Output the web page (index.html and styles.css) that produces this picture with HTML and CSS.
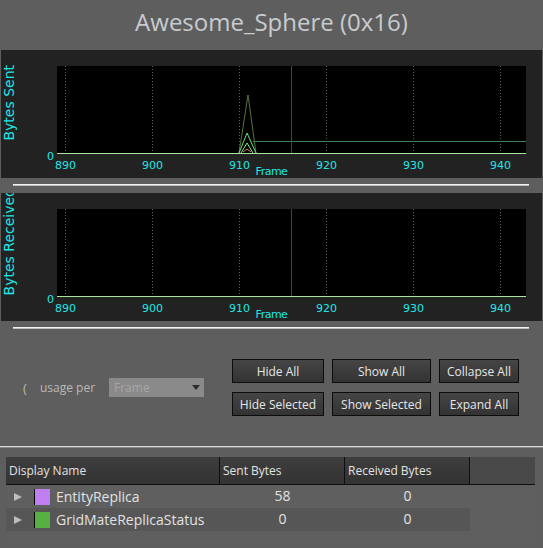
FILE: index.html
```html
<!DOCTYPE html>
<html>
<head>
<meta charset="utf-8">
<link rel="stylesheet" href="styles.css">
</head>
<body>
<div class="app">
  <h1 class="title">Awesome_Sphere (0x16)</h1>

  <section class="chart">
    <div class="chart-body">
      <div class="ycol">
        <span class="ylabel ylabel-sent">Bytes Sent</span>
        <span class="zero">0</span>
      </div>
      <svg class="plot" width="469" height="88" viewBox="0 0 469 88">
        <rect x="0" y="0" width="469" height="88" fill="#000"/>
        <g stroke="#5c5c5c" stroke-width="1" stroke-dasharray="1 2">
          <line x1="8.5" y1="0" x2="8.5" y2="87"/>
          <line x1="95.5" y1="0" x2="95.5" y2="87"/>
          <line x1="182.5" y1="0" x2="182.5" y2="87"/>
          <line x1="269.5" y1="0" x2="269.5" y2="87"/>
          <line x1="356.5" y1="0" x2="356.5" y2="87"/>
          <line x1="443.5" y1="0" x2="443.5" y2="87"/>
        </g>
        <line x1="196" y1="75.5" x2="469" y2="75.5" stroke="#3e7c62" stroke-width="1"/>
        <polyline points="182,87 191,29 199,87" fill="none" stroke="#55723f" stroke-width="1"/>
        <polyline points="182,87 190,67 199,87" fill="none" stroke="#62e27c" stroke-width="1"/>
        <polyline points="184,87 190,77 196,87" fill="none" stroke="#86e486" stroke-width="1"/>
        <polyline points="186,86 190,83 194,86" fill="none" stroke="#e07a6e" stroke-width="1"/>
        <line x1="234.5" y1="0" x2="234.5" y2="87" stroke="#e00000" stroke-width="1"/>
        <line x1="0" y1="87.5" x2="469" y2="87.5" stroke="#a8e6a0" stroke-width="1"/>
      </svg>
    </div>
    <div class="ticks"><span>890</span><span>900</span><span>910</span><span>920</span><span>930</span><span>940</span></div>
    <div class="xlabel">Frame</div>
  </section>

  <div class="splitter"></div>

  <section class="chart">
    <div class="chart-body">
      <div class="ycol">
        <span class="ylabel ylabel-recv">Bytes Received</span>
        <span class="zero">0</span>
      </div>
      <svg class="plot" width="469" height="88" viewBox="0 0 469 88">
        <rect x="0" y="0" width="469" height="88" fill="#000"/>
        <g stroke="#5c5c5c" stroke-width="1" stroke-dasharray="1 2">
          <line x1="8.5" y1="0" x2="8.5" y2="87"/>
          <line x1="95.5" y1="0" x2="95.5" y2="87"/>
          <line x1="182.5" y1="0" x2="182.5" y2="87"/>
          <line x1="269.5" y1="0" x2="269.5" y2="87"/>
          <line x1="356.5" y1="0" x2="356.5" y2="87"/>
          <line x1="443.5" y1="0" x2="443.5" y2="87"/>
        </g>
        <line x1="234.5" y1="0" x2="234.5" y2="87" stroke="#e00000" stroke-width="1"/>
        <line x1="0" y1="87.5" x2="469" y2="87.5" stroke="#a8e6a0" stroke-width="1"/>
      </svg>
    </div>
    <div class="ticks"><span>890</span><span>900</span><span>910</span><span>920</span><span>930</span><span>940</span></div>
    <div class="xlabel">Frame</div>
  </section>

  <div class="splitter"></div>

  <div class="controls">
    <div class="usage">
      <span class="clip">(</span>
      <span class="usage-label">usage per</span>
      <div class="combo"><span>Frame</span><span class="arrow"></span></div>
    </div>
    <div class="buttons">
      <button class="btn">Hide All</button>
      <button class="btn">Show All</button>
      <button class="btn">Collapse All</button>
      <button class="btn">Hide Selected</button>
      <button class="btn">Show Selected</button>
      <button class="btn">Expand All</button>
    </div>
  </div>

  <div class="rule"></div>

  <div class="tree">
    <div class="tree-head">
      <div class="hcell">Display Name</div>
      <div class="hcell">Sent Bytes</div>
      <div class="hcell">Received Bytes</div>
      <div class="hcell hfill"></div>
    </div>
    <div class="tree-row">
      <div class="cell name"><span class="expander"></span><span class="swatch swatch-purple"></span>EntityReplica</div>
      <div class="cell num">58</div>
      <div class="cell num">0</div>
    </div>
    <div class="tree-row alt">
      <div class="cell name"><span class="expander"></span><span class="swatch swatch-green"></span>GridMateReplicaStatus</div>
      <div class="cell num">0</div>
      <div class="cell num">0</div>
    </div>
  </div>
</div>
</body>
</html>
```

FILE: styles.css
```css
html, body {
  margin: 0;
  padding: 0;
}
body {
  background: #5e5e5e;
  width: 543px;
  height: 548px;
  overflow: hidden;
  font-family: "Open Sans", "DejaVu Sans", sans-serif;
}
.app {
  display: flex;
  flex-direction: column;
}
.title {
  margin: 0;
  height: 50px;
  line-height: 44px;
  text-align: center;
  font-size: 24px;
  font-weight: normal;
  color: #c8cbcf;
}
.chart {
  margin: 0 1px;
  height: 128px;
  background: #222222;
  overflow: hidden;
  display: flex;
  flex-direction: column;
  font-family: "DejaVu Sans", sans-serif;
  color: #1fe6e6;
}
.chart-body {
  display: flex;
  padding-top: 16px;
  height: 88px;
}
.ycol {
  width: 56px;
  display: flex;
  align-items: flex-end;
}
.ylabel {
  writing-mode: vertical-rl;
  transform: rotate(180deg);
  font-size: 14px;
  line-height: 16px;
  white-space: nowrap;
  align-self: flex-end;
}
.ylabel-sent {
  margin-bottom: 13px;
}
.ylabel-recv {
  margin-bottom: 2px;
}
.zero {
  margin-left: auto;
  margin-right: 3px;
  font-size: 11px;
  line-height: 13px;
  margin-bottom: -9px;
}
.plot {
  display: block;
  flex: none;
}
.ticks {
  display: flex;
  margin-left: 21px;
  margin-top: 5px;
  font-size: 11px;
  line-height: 13px;
}
.ticks span {
  width: 87px;
  text-align: center;
  flex: none;
}
.xlabel {
  text-align: center;
  font-size: 11px;
  line-height: 13px;
  letter-spacing: -0.5px;
  margin-top: -7px;
}
.splitter {
  margin: 6px 14px 7px 13px;
  height: 1px;
  background: #f2f2f2;
  border-bottom: 1px solid #bdbdbd;
}
.controls {
  height: 117px;
  display: flex;
  align-items: center;
  margin-top: -7px;
  padding-left: 23px;
  padding-right: 24px;
  font-size: 12px;
}
.usage {
  display: flex;
  align-items: center;
  color: #b9b9b9;
}
.clip {
  width: 17px;
  font-size: 13px;
}
.usage-label {
  width: 69px;
}
.combo {
  width: 95px;
  height: 19px;
  background: #8a8a8a;
  color: #a6a6a6;
  display: flex;
  align-items: center;
  justify-content: space-between;
  padding: 0 4px 0 5px;
  box-sizing: border-box;
}
.arrow {
  width: 0;
  height: 0;
  border-left: 4px solid transparent;
  border-right: 4px solid transparent;
  border-top: 5px solid #2e2e2e;
}
.buttons {
  margin-left: auto;
  display: grid;
  grid-template-columns: 92px 99px 80px;
  column-gap: 8px;
  row-gap: 9px;
}
.btn {
  height: 24px;
  margin: 0;
  padding: 0;
  border: 1px solid #0c0c0c;
  background: linear-gradient(#454545, #333333);
  color: #e6e6e6;
  font-family: "Open Sans", sans-serif;
  font-size: 12px;
}
.rule {
  height: 1px;
  background: #d9d9d9;
  border-bottom: 1px solid #8a8a8a;
}
.tree {
  margin: 9px 8px 0 6px;
  height: 88px;
  background: #5f5f5f;
  font-family: "Open Sans", sans-serif;
  color: #e2e2e2;
}
.tree-head {
  display: grid;
  grid-template-columns: 214px 125px 125px 1fr;
  border-bottom: 1px solid #111;
  box-sizing: border-box;
  height: 28px;
}
.hcell {
  background: linear-gradient(#3e3e3e, #333333);
  border-right: 1px solid #0e0e0e;
  font-size: 12px;
  line-height: 27px;
  padding-left: 3px;
  white-space: nowrap;
}
.hfill {
  border-right: none;
  background: #494949;
}
.tree-row {
  display: grid;
  grid-template-columns: 214px 125px 125px;
  height: 23px;
  font-size: 14px;
  line-height: 22px;
}
.tree-row .cell {
  background: #5f5f5f;
}
.tree-row.alt .cell {
  background: #565656;
}
.cell.name {
  display: flex;
  align-items: center;
}
.expander {
  width: 0;
  height: 0;
  border-top: 4.5px solid transparent;
  border-bottom: 4.5px solid transparent;
  border-left: 8px solid #bdbdbd;
  margin-left: 8px;
  margin-right: 12px;
}
.swatch {
  width: 15px;
  height: 16px;
  border-left: 1px solid #000;
  margin-right: 6px;
}
.swatch-purple {
  background: #c07ff0;
}
.swatch-green {
  background: #57b042;
}
.num {
  text-align: center;
}
```
